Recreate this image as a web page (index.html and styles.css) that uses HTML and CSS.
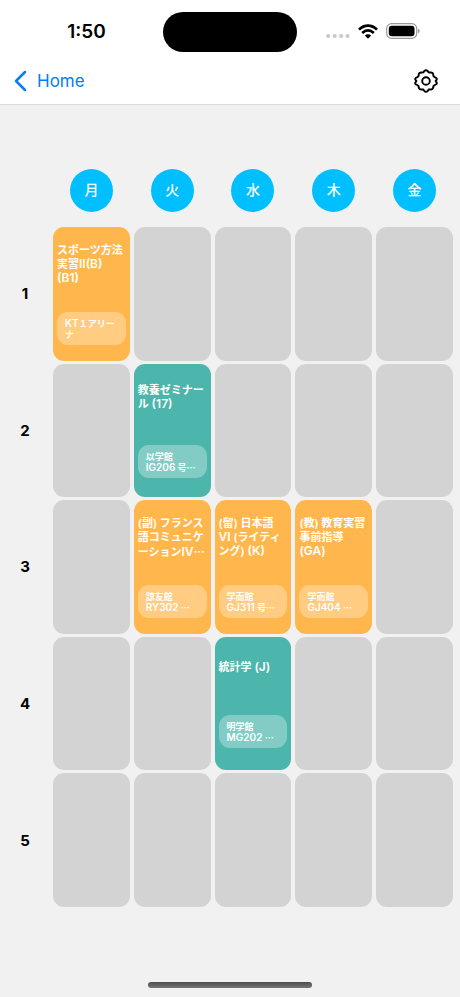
FILE: index.html
```html
<!DOCTYPE html>
<html lang="ja">
<head>
<meta charset="utf-8">
<meta name="viewport" content="width=device-width, initial-scale=1">
<title>Home</title>
<link rel="stylesheet" href="styles.css">
</head>
<body>
<header class="top">
  <div class="status">
    <time class="clock">1:50</time>
    <div class="island"></div>
    <div class="indicators">
      <svg class="signal" width="24" height="6" viewBox="0 0 24 6" aria-hidden="true"><g fill="#c9c9c9"><circle cx="2.2" cy="3" r="2.1"/><circle cx="8.7" cy="3" r="2.1"/><circle cx="15.2" cy="3" r="2.1"/><circle cx="21.5" cy="3" r="2.1"/></g></svg>
      <svg width="20" height="15" viewBox="0 0 20 15" aria-hidden="true"><g fill="none" stroke="#000" stroke-width="2.7"><path d="M1 5.6Q5 1.6 10 1.6T19 5.6"/><path d="M4.2 9Q6.9 6.3 10 6.3T15.8 9"/></g><path d="M10 14.7 6.8 11.6Q10 8.9 13.2 11.6Z"/></svg>
      <svg width="34" height="16" viewBox="0 0 34 16" aria-hidden="true"><rect x=".7" y=".7" width="30" height="14.6" rx="4.8" fill="none" stroke="#999" stroke-width="1.2"/><rect x="2.8" y="2.8" width="25.7" height="10.4" rx="3"/><path d="M32.2 5.7Q33.6 6.2 33.6 8T32.2 10.3Z" fill="#888"/></svg>
    </div>
  </div>
  <nav class="nav">
    <a class="back" href="#">
      <svg width="13" height="22" viewBox="0 0 13 22" aria-hidden="true"><path d="M11 2 2 11l9 9" fill="none" stroke="#087cf0" stroke-width="2.5" stroke-linecap="round" stroke-linejoin="round"/></svg>
      <span>Home</span>
    </a>
    <button class="settings" type="button" aria-label="設定">
      <svg width="24" height="24" viewBox="0 0 24 24" aria-hidden="true"><g fill="none" stroke="#000" stroke-width="1.9" stroke-linejoin="round"><path d="M10.2 2.1Q12 .3 13.8 2.1L14.6 3.4 16.1 3.5Q18.8 3.1 19.2 5.4L19.5 7.2 20.9 8.3Q23.3 9.1 22.7 10.6L21.6 12 22.7 13.6Q23.3 15.3 20.9 15.9L19.5 17 19.2 18.8Q18.6 20.9 16.2 20.4L14.7 20.5 13.8 21.8Q12 23.7 10.2 21.8L9.3 20.5 7.8 20.4Q5.4 20.9 4.8 18.8L4.5 17 3.1 15.9Q.7 15.3 1.3 13.6L2.4 12 1.3 10.5Q.7 9.1 3.1 8.3L4.5 7.2 4.8 5.4Q5.2 3.1 7.9 3.5L9.4 3.4Z"/><circle cx="12" cy="12" r="3.8"/></g></svg>
    </button>
  </nav>
</header>
<main class="content">
  <table class="timetable">
    <colgroup><col class="period-col"><col><col><col><col><col></colgroup>
    <thead>
      <tr><td></td><th scope="col"><span class="day">月</span></th><th scope="col"><span class="day">火</span></th><th scope="col"><span class="day">水</span></th><th scope="col"><span class="day">木</span></th><th scope="col"><span class="day">金</span></th></tr>
    </thead>
    <tbody>
      <tr>
        <th scope="row">1</th>
        <td class="orange"><div class="lesson"><div class="title">スポーツ方法<br>実習<span class="latin">Ⅱ(B)</span><br><span class="latin">(B1)</span></div><div class="room"><span class="latin">KT</span>１アリー<br>ナ</div></div></td>
        <td></td><td></td><td></td><td></td>
      </tr>
      <tr>
        <th scope="row">2</th>
        <td></td>
        <td class="teal"><div class="lesson"><div class="title">教養ゼミナー<br>ル <span class="latin">(17)</span></div><div class="room">以学館<br><span class="latin">IG206</span> 号<span class="dots">…</span></div></div></td>
        <td></td><td></td><td></td>
      </tr>
      <tr>
        <th scope="row">3</th>
        <td></td>
        <td class="orange"><div class="lesson"><div class="title">(副) フランス<br>語コミュニケ<br>ーション<span class="latin">Ⅳ</span><span class="dots">…</span></div><div class="room">諒友館<br><span class="latin">RY302</span> <span class="dots">…</span></div></div></td>
        <td class="orange"><div class="lesson"><div class="title">(留) 日本語<br><span class="latin">Ⅵ</span> (ライティ<br>ング) <span class="latin">(K)</span></div><div class="room">学而館<br><span class="latin">GJ311</span> 号<span class="dots">…</span></div></div></td>
        <td class="orange"><div class="lesson"><div class="title">(教) 教育実習<br>事前指導<br><span class="latin">(GA)</span></div><div class="room">学而館<br><span class="latin">GJ404</span> <span class="dots">…</span></div></div></td>
        <td></td>
      </tr>
      <tr>
        <th scope="row">4</th>
        <td></td><td></td>
        <td class="teal"><div class="lesson"><div class="title">統計学 <span class="latin">(J)</span></div><div class="room">明学館<br><span class="latin">MG202</span> <span class="dots">…</span></div></div></td>
        <td></td><td></td>
      </tr>
      <tr>
        <th scope="row">5</th>
        <td></td><td></td><td></td><td></td><td></td>
      </tr>
    </tbody>
  </table>
</main>
<footer class="home-area"><div class="home-bar"></div></footer>
</body>
</html>
```
FILE: styles.css
```css
* { box-sizing: border-box; }

body {
  margin: 0;
  min-height: 100vh;
  display: flex;
  flex-direction: column;
  background: #f1f1f1;
  color: #000;
  font-family: Inter, "Noto Sans CJK JP", sans-serif;
}

.top {
  background: #fff;
  border-bottom: 1px solid #dedede;
}

.status {
  display: grid;
  grid-template-columns: 1fr 134px 1fr;
  align-items: center;
  padding-top: 12px;
}

.clock {
  padding-left: 10px;
  text-align: center;
  font-size: 19px;
  font-weight: 600;
  line-height: 24px;
}

.island {
  height: 40px;
  border-radius: 20px;
  background: #000;
}

.indicators {
  display: flex;
  align-items: center;
  justify-content: flex-end;
  gap: 8px;
  padding-right: 40px;
  padding-bottom: 2px;
}

.signal { align-self: flex-end; }

.nav {
  display: flex;
  align-items: center;
  justify-content: space-between;
  height: 52px;
  padding: 6px 22px 0 14px;
}

.back {
  display: flex;
  align-items: center;
  gap: 10px;
  color: #087cf0;
  font-size: 17px;
  line-height: 24px;
  text-decoration: none;
}

.settings {
  display: flex;
  padding: 0;
  border: 0;
  background: none;
}

.content {
  flex: 1;
  display: grid;
  padding: 61px 3px 0 0;
}

.timetable {
  width: 100%;
  height: 100%;
  table-layout: fixed;
  border-collapse: separate;
  border-spacing: 4px 3px;
}

.period-col { width: 45px; }

.timetable th,
.timetable td { padding: 0; }

thead th {
  height: 55px;
  vertical-align: top;
}

.day {
  display: block;
  width: 43px;
  height: 43px;
  margin: 0 auto;
  border-radius: 50%;
  background: #00bfff;
  color: #fff;
  font-size: 14px;
  font-weight: 500;
  line-height: 42px;
}

tbody tr { height: 133px; }

.timetable tbody th {
  padding-right: 3px;
  font-size: 15px;
  font-weight: 700;
}

tbody td {
  height: 133px;
  border-radius: 11px;
  background: #d3d3d3;
}

tbody .orange { background: #ffb74d; }
tbody .teal { background: #4db6ac; }

.lesson {
  display: flex;
  flex-direction: column;
  justify-content: space-around;
  height: 133px;
  padding: 2px 4px;
  color: #fff;
  white-space: nowrap;
}

.title {
  font-size: 11px;
  font-weight: 600;
  line-height: 14px;
}

.title .latin {
  font-size: 12px;
  line-height: 1;
}

.room {
  padding: 6px 8px 5px;
  border-radius: 11px;
  background: rgb(255 255 255 / 30%);
  font-size: 9px;
  font-weight: 600;
  line-height: 11px;
}

.room .latin {
  font-size: 10px;
  line-height: 1;
}

.dots { font-family: "Noto Sans CJK JP", sans-serif; }

.home-area {
  display: flex;
  align-items: flex-end;
  justify-content: center;
  height: 87px;
  padding-bottom: 9px;
}

.home-bar {
  width: 164px;
  height: 6px;
  border-radius: 3px;
  background: linear-gradient(#4c4c4c, #777);
}
```
